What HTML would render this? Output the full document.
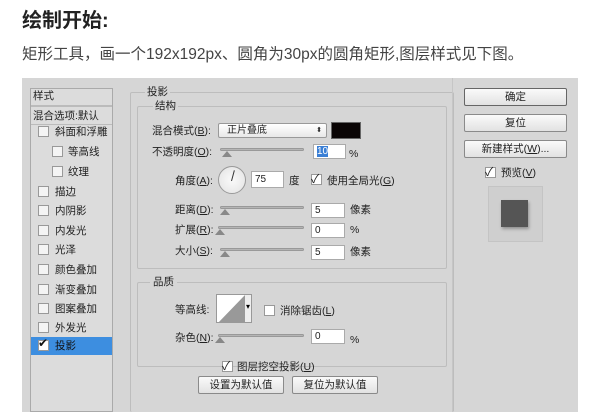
<!DOCTYPE html>
<html><head><meta charset="utf-8"><style>
*{margin:0;padding:0;box-sizing:border-box}
body{width:600px;height:412px;background:#fff;position:relative;overflow:hidden;font-family:"Liberation Sans","Noto Sans CJK SC",sans-serif;color:#222}
.a{position:absolute;white-space:nowrap}
.t{font-size:10.5px;line-height:12px;color:#222}
.cb{position:absolute;width:11px;height:11px;border:1px solid #999;background:#f4f4f4}
.inp{position:absolute;height:15px;background:#fff;border:1px solid #aaa;font-size:10px;line-height:13px;padding-left:3px}
.sl{position:absolute;height:3px;background:#b5b5b5;border:1px solid #999;border-radius:2px}
.th{position:absolute;width:0;height:0;border-left:5px solid transparent;border-right:5px solid transparent;border-bottom:6px solid #888}
.btn{position:absolute;border:1px solid #8a8a8a;background:linear-gradient(#fafafa,#e2e2e2);font-size:10.5px;text-align:center;line-height:16px;border-radius:2px}
.grp{position:absolute;border:1px solid #bdbdbd;border-radius:2px}
</style></head><body>
<div class="a" style="left:22px;top:8px;font-size:20px;font-weight:bold;color:#222;line-height:26px">绘制开始:</div>
<div class="a" style="left:22px;top:45px;font-size:15.5px;color:#444;line-height:20px">矩形工具，画一个192x192px、圆角为30px的圆角矩形,图层样式见下图。</div>

<div class="a" style="left:22px;top:78px;width:556px;height:334px;background:#d6d6d6"></div>
<!-- left panel -->
<div class="a" style="left:30px;top:88px;width:83px;height:324px;background:#dcdcdc;border:1px solid #aaa"></div>
<div class="a t" style="left:33px;top:90px">样式</div>
<div class="a" style="left:31px;top:105px;width:81px;height:2px;background:#bbb"></div>
<div class="a t" style="left:33px;top:110px">混合选项:默认</div>
<div class="a" style="left:31px;top:124px;width:81px;height:1px;background:#bbb"></div>

<div class="cb" style="left:38px;top:126px"></div><div class="a t" style="left:55px;top:126px">斜面和浮雕</div>
<div class="cb" style="left:52px;top:146px"></div><div class="a t" style="left:68px;top:146px">等高线</div>
<div class="cb" style="left:52px;top:166px"></div><div class="a t" style="left:68px;top:166px">纹理</div>
<div class="cb" style="left:38px;top:186px"></div><div class="a t" style="left:55px;top:186px">描边</div>
<div class="cb" style="left:38px;top:205px"></div><div class="a t" style="left:55px;top:205px">内阴影</div>
<div class="cb" style="left:38px;top:225px"></div><div class="a t" style="left:55px;top:225px">内发光</div>
<div class="cb" style="left:38px;top:244px"></div><div class="a t" style="left:55px;top:244px">光泽</div>
<div class="cb" style="left:38px;top:264px"></div><div class="a t" style="left:55px;top:264px">颜色叠加</div>
<div class="cb" style="left:38px;top:284px"></div><div class="a t" style="left:55px;top:284px">渐变叠加</div>
<div class="cb" style="left:38px;top:303px"></div><div class="a t" style="left:55px;top:303px">图案叠加</div>
<div class="cb" style="left:38px;top:322px"></div><div class="a t" style="left:55px;top:322px">外发光</div>
<div class="a" style="left:31px;top:337px;width:81px;height:18px;background:#3d8ee0"></div>
<div class="cb" style="left:38px;top:340px;background:#fff"></div><div class="a" style="left:38px;top:336px;font-size:12px;color:#111">✔</div>
<div class="a t" style="left:55px;top:340px;color:#111">投影</div>

<!-- center -->
<div class="grp" style="left:130px;top:92px;width:324px;height:320px;border-bottom:none"></div>
<div class="a t" style="left:145px;top:86px;background:#d6d6d6;padding:0 2px">投影</div>
<div class="grp" style="left:137px;top:106px;width:310px;height:163px"></div>
<div class="a t" style="left:153px;top:100px;background:#d6d6d6;padding:0 2px">结构</div>

<div class="a t" style="left:152px;top:125px">混合模式(<u>B</u>):</div>
<div class="a" style="left:218px;top:123px;width:109px;height:15px;background:linear-gradient(#fff,#e8e8e8);border:1px solid #999;border-radius:2px;font-size:10px;line-height:13px;padding-left:8px">正片叠底<span style="position:absolute;right:4px;font-size:7px">⬍</span></div>
<div class="a" style="left:331px;top:122px;width:30px;height:17px;background:#0a0505;border:1px solid #666"></div>

<div class="a t" style="left:152px;top:146px">不透明度(<u>O</u>):</div>
<div class="sl" style="left:220px;top:148px;width:84px"></div><div class="th" style="left:222px;top:151px"></div>
<div class="inp" style="left:313px;top:144px;width:33px"><span style="background:#3a7fd5;color:#fff">10</span></div>
<div class="a t" style="left:349px;top:148px">%</div>

<div class="a t" style="left:175px;top:175px">角度(<u>A</u>):</div>
<div class="a" style="left:218px;top:166px;width:28px;height:28px;border-radius:50%;border:1px solid #999;background:radial-gradient(#fafafa,#e2e2e2)"></div>
<div class="a" style="left:231px;top:170px;width:1px;height:11px;background:#333;transform:rotate(15deg);transform-origin:bottom"></div>
<div class="inp" style="left:251px;top:171px;width:33px;height:17px;line-height:15px">75</div>
<div class="a t" style="left:289px;top:175px">度</div>
<div class="cb" style="left:311px;top:174px;background:#fff"></div><div class="a" style="left:311px;top:170px;font-size:12px">✓</div>
<div class="a t" style="left:327px;top:175px">使用全局光(<u>G</u>)</div>

<div class="a t" style="left:175px;top:204px">距离(<u>D</u>):</div>
<div class="sl" style="left:220px;top:206px;width:84px"></div><div class="th" style="left:220px;top:209px"></div>
<div class="inp" style="left:311px;top:203px;width:34px">5</div>
<div class="a t" style="left:350px;top:204px">像素</div>

<div class="a t" style="left:175px;top:224px">扩展(<u>R</u>):</div>
<div class="sl" style="left:218px;top:226px;width:86px"></div><div class="th" style="left:215px;top:229px"></div>
<div class="inp" style="left:311px;top:223px;width:34px">0</div>
<div class="a t" style="left:350px;top:224px">%</div>

<div class="a t" style="left:175px;top:245px">大小(<u>S</u>):</div>
<div class="sl" style="left:220px;top:248px;width:84px"></div><div class="th" style="left:220px;top:251px"></div>
<div class="inp" style="left:311px;top:245px;width:34px">5</div>
<div class="a t" style="left:350px;top:246px">像素</div>

<div class="grp" style="left:137px;top:282px;width:310px;height:85px"></div>
<div class="a t" style="left:150px;top:276px;background:#d6d6d6;padding:0 3px">品质</div>
<div class="a t" style="left:175px;top:304px">等高线:</div>
<div class="a" style="left:216px;top:294px;width:36px;height:29px;border:1px solid #999;background:#fff;overflow:hidden"><svg width="36" height="29"><polygon points="0,29 28,0 28,29" fill="#999"/><rect x="28" y="0" width="8" height="29" fill="#eee"/><text x="29" y="14" font-size="8">▾</text></svg></div>
<div class="cb" style="left:264px;top:305px;background:#fff"></div>
<div class="a t" style="left:280px;top:305px">消除锯齿(<u>L</u>)</div>

<div class="a t" style="left:175px;top:332px">杂色(<u>N</u>):</div>
<div class="sl" style="left:218px;top:334px;width:86px"></div><div class="th" style="left:215px;top:337px"></div>
<div class="inp" style="left:311px;top:329px;width:34px">0</div>
<div class="a t" style="left:350px;top:334px">%</div>

<div class="cb" style="left:222px;top:361px;background:#fff"></div><div class="a" style="left:222px;top:357px;font-size:12px">✓</div>
<div class="a t" style="left:237px;top:361px">图层挖空投影(<u>U</u>)</div>
<div class="btn" style="left:198px;top:376px;width:86px;height:18px">设置为默认值</div>
<div class="btn" style="left:292px;top:376px;width:86px;height:18px">复位为默认值</div>

<!-- right -->
<div class="a" style="left:452px;top:78px;width:1px;height:334px;background:#c6c6c6"></div>
<div class="btn" style="left:464px;top:88px;width:103px;height:18px;border-color:#666">确定</div>
<div class="btn" style="left:464px;top:114px;width:103px;height:18px">复位</div>
<div class="btn" style="left:464px;top:140px;width:103px;height:18px">新建样式(<u>W</u>)...</div>
<div class="cb" style="left:485px;top:167px;background:#fff"></div><div class="a" style="left:485px;top:163px;font-size:12px">✓</div>
<div class="a t" style="left:501px;top:167px">预览(<u>V</u>)</div>
<div class="a" style="left:488px;top:186px;width:55px;height:56px;background:#cfcfcf;border:1px solid #c4c4c4"></div>
<div class="a" style="left:501px;top:200px;width:27px;height:27px;background:#555;box-shadow:1px 2px 3px rgba(0,0,0,.3)"></div>
</body></html>
